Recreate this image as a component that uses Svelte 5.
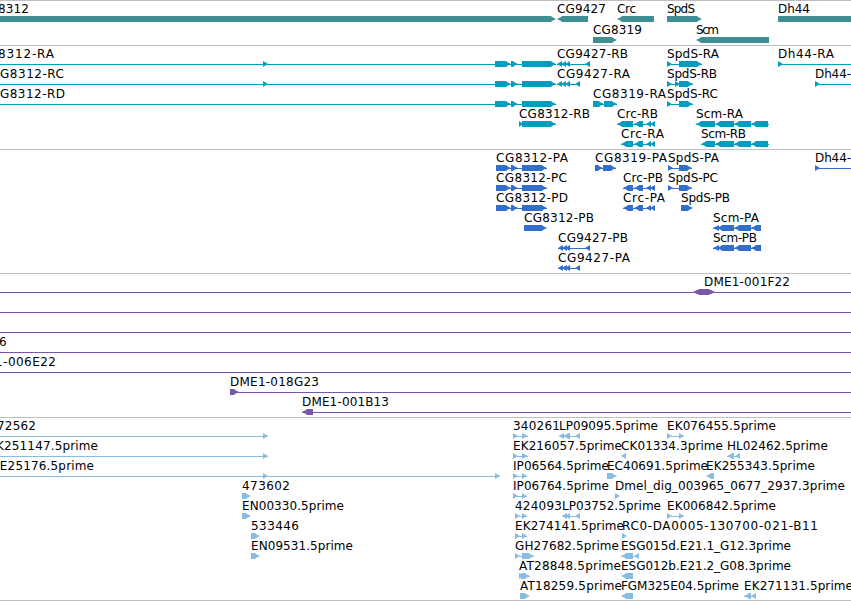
<script>
  // Label: [text, left, right, row]
  // Feature: [row, direction, line start, line end, [[start, end], ...]]
  const tracks = [
    {
      name: 'genes', color: '#3f8e94', height: 45, pitch: 21,
      labels: [
        ['8312', -2, 29, 0], ['CG9427', 557, 606, 0], ['Crc', 617, 636, 0],
        ['SpdS', 667, 695, 0], ['Dh44', 778, 810, 0],
        ['CG8319', 593, 642, 1], ['Scm', 696, 719, 1]
      ],
      features: [
        [0, 'r', 0, 0, [[-10, 556]]], [0, 'l', 0, 0, [[557, 588]]],
        [0, 'l', 0, 0, [[617, 654]]], [0, 'r', 0, 0, [[667, 702]]],
        [0, 'r', 0, 0, [[778, 870]]], [1, 'r', 0, 0, [[593, 617]]],
        [1, 'l', 0, 0, [[696, 769]]]
      ]
    },
    {
      name: 'transcripts', color: '#009dbf', height: 104, pitch: 20,
      labels: [
        ['8312-RA', -2, 54, 0], ['G8312-RC', 0, 64, 1], ['G8312-RD', 0, 65, 2],
        ['CG9427-RB', 557, 628, 0], ['CG9427-RA', 557, 630, 1], ['CG8319-RA', 593, 666, 2],
        ['CG8312-RB', 519, 590, 3], ['Crc-RB', 617, 658, 3], ['Crc-RA', 621, 664, 4],
        ['SpdS-RA', 667, 719, 0], ['SpdS-RB', 667, 717, 1], ['SpdS-RC', 667, 718, 2],
        ['Scm-RA', 696, 743, 3], ['Scm-RB', 701, 746, 4],
        ['Dh44-RA', 778, 834, 0], ['Dh44-', 815, 851, 1]
      ],
      features: [
        [0, 'r', 0, 556, [[263, 268], [495, 511], [511, 518], [522, 556]]],
        [1, 'r', 0, 556, [[263, 268], [495, 511], [511, 518], [522, 556]]],
        [2, 'r', 0, 556, [[495, 511], [511, 518], [522, 556]]],
        [3, 'r', 519, 556, [[519, 523], [522, 556]]],
        [0, 'l', 557, 590, [[557, 562], [561, 566], [565, 570], [585, 590]]],
        [1, 'l', 557, 580, [[557, 562], [561, 566], [565, 570], [575, 580]]],
        [2, 'r', 593, 617, [[593, 604], [604, 617]]],
        [3, 'l', 617, 655, [[617, 633], [634, 643], [646, 651], [650, 655]]],
        [4, 'l', 621, 655, [[621, 633], [634, 643], [646, 651], [650, 655]]],
        [0, 'r', 667, 702, [[667, 672], [679, 702]]],
        [1, 'r', 667, 693, [[667, 672], [675, 680], [679, 693]]],
        [2, 'r', 667, 693, [[667, 672], [679, 693]]],
        [3, 'l', 696, 769, [[696, 715], [715, 734], [734, 751], [751, 768]]],
        [4, 'l', 701, 769, [[701, 715], [715, 734], [734, 751], [751, 768]]],
        [0, 'r', 778, 851, [[778, 783]]],
        [1, 'r', 815, 851, [[815, 820]]]
      ]
    },
    {
      name: 'proteins', color: '#326fcd', height: 124, pitch: 20,
      labels: [
        ['CG8312-PA', 496, 568, 0], ['CG8312-PC', 496, 567, 1], ['CG8312-PD', 496, 568, 2],
        ['CG8312-PB', 524, 594, 3], ['CG9427-PB', 558, 628, 4], ['CG9427-PA', 558, 630, 5],
        ['CG8319-PA', 595, 667, 0], ['Crc-PB', 623, 663, 1], ['Crc-PA', 623, 665, 2],
        ['SpdS-PA', 668, 719, 0], ['SpdS-PC', 668, 718, 1], ['SpdS-PB', 681, 730, 2],
        ['Scm-PA', 713, 759, 3], ['Scm-PB', 713, 757, 4], ['Dh44-', 815, 851, 0]
      ],
      features: [
        [0, 'r', 496, 547, [[496, 511], [511, 518], [522, 547]]],
        [1, 'r', 496, 547, [[496, 511], [511, 518], [522, 547]]],
        [2, 'r', 496, 547, [[496, 511], [511, 518], [522, 547]]],
        [3, 'r', 0, 0, [[524, 547]]],
        [4, 'l', 558, 590, [[558, 563], [562, 567], [565, 570], [585, 590]]],
        [5, 'l', 558, 580, [[558, 563], [562, 567], [565, 570], [575, 580]]],
        [0, 'r', 595, 616, [[595, 603], [603, 616]]],
        [1, 'l', 623, 655, [[623, 633], [634, 643], [646, 651], [650, 655]]],
        [2, 'l', 623, 655, [[623, 633], [634, 643], [646, 651], [650, 655]]],
        [0, 'r', 668, 692, [[668, 673], [679, 692]]],
        [1, 'r', 668, 692, [[668, 673], [679, 692]]],
        [2, 'r', 0, 0, [[681, 693]]],
        [3, 'l', 713, 761, [[713, 719], [717, 734], [734, 751], [751, 761]]],
        [4, 'l', 713, 761, [[713, 719], [717, 734], [734, 751], [751, 761]]],
        [0, 'r', 815, 851, [[815, 820]]]
      ]
    },
    {
      name: 'clones', color: '#7757a7', height: 144, pitch: 20,
      labels: [
        ['DME1-001F22', 704, 790, 0], ['6', -1, 7, 3], ['1-006E22', -5, 56, 4],
        ['DME1-018G23', 230, 319, 5], ['DME1-001B13', 302, 389, 6]
      ],
      features: [
        [0, 'b', 0, 851, [[693, 715]]], [1, 'r', 0, 851, []], [2, 'r', 0, 851, []],
        [3, 'r', 0, 851, []], [4, 'r', 0, 851, []],
        [5, 'r', 230, 851, [[230, 239]]], [6, 'l', 302, 851, [[302, 313]]]
      ]
    },
    {
      name: 'ests', color: '#89bddf', height: 183, pitch: 20,
      labels: [
        ['72562', -3, 36, 0], ['K251147.5prime', -4, 98, 1], ['LE25176.5prime', -7, 94, 2],
        ['473602', 242, 290, 3], ['EN00330.5prime', 242, 344, 4],
        ['533446', 251, 299, 5], ['EN09531.5prime', 251, 353, 6],
        ['340261', 513, 560, 0], ['EK216057.5prime', 513, 622, 1],
        ['IP06564.5prime', 513, 609, 2], ['IP06764.5prime', 513, 609, 3],
        ['424093', 515, 562, 4], ['EK274141.5prime', 515, 624, 5],
        ['GH27682.5prime', 515, 619, 6], ['AT28848.5prime', 519, 621, 7],
        ['AT18259.5prime', 520, 622, 8],
        ['LP09095.5prime', 559, 658, 0], ['EK076455.5prime', 667, 776, 0],
        ['CK01334.3prime', 621, 723, 1], ['HL02462.5prime', 727, 828, 1],
        ['EC40691.5prime', 607, 708, 2], ['EK255343.5prime', 706, 815, 2],
        ['Dmel_dig_003965_0677_2937.3prime', 615, 845, 3],
        ['LP03752.5prime', 562, 661, 4], ['EK006842.5prime', 667, 776, 4],
        ['RC0-DA0005-130700-021-B11', 622, 818, 5],
        ['ESG015d.E21.1_G12.3prime', 621, 791, 6], ['ESG012b.E21.2_G08.3prime', 621, 791, 7],
        ['FGM325E04.5prime', 621, 739, 8], ['EK271131.5prime', 744, 853, 8]
      ],
      features: [
        [0, 'r', 0, 268, [[263, 268]]], [1, 'r', 0, 268, [[263, 268]]],
        [2, 'r', 0, 500, [[263, 268], [495, 500]]],
        [3, 'r', 0, 0, [[242, 251]]], [4, 'r', 0, 0, [[242, 251]]],
        [5, 'r', 0, 0, [[251, 260]]], [6, 'r', 0, 0, [[251, 260]]],
        [0, 'r', 513, 528, [[513, 518], [522, 528]]],
        [1, 'r', 513, 528, [[513, 518], [522, 528]]],
        [2, 'r', 513, 527, [[513, 518], [522, 527]]],
        [3, 'r', 513, 527, [[513, 518], [522, 527]]],
        [4, 'r', 515, 527, [[515, 520], [522, 527]]],
        [5, 'r', 515, 527, [[515, 520], [522, 527]]],
        [6, 'r', 515, 534, [[515, 520], [522, 534]]],
        [7, 'r', 519, 530, [[519, 524], [521, 530]]],
        [8, 'r', 0, 0, [[520, 530]]],
        [0, 'l', 559, 580, [[559, 564], [563, 570], [575, 580]]],
        [4, 'l', 562, 580, [[562, 567], [565, 570], [575, 580]]],
        [0, 'r', 667, 684, [[667, 672], [679, 684]]],
        [4, 'r', 667, 684, [[667, 672], [679, 684]]],
        [1, 'l', 0, 0, [[621, 626]]],
        [1, 'l', 727, 740, [[727, 734], [735, 740]]],
        [2, 'r', 0, 0, [[607, 617]]], [2, 'l', 0, 0, [[706, 714]]],
        [3, 'r', 0, 0, [[615, 620]]], [5, 'r', 0, 0, [[622, 627]]],
        [6, 'l', 621, 639, [[621, 633], [634, 639]]],
        [7, 'l', 0, 0, [[621, 633]]], [8, 'l', 0, 0, [[621, 633]]],
        [8, 'l', 744, 756, [[744, 751], [751, 756]]]
      ]
    }
  ];

  // Exon block whose pointed end gives the strand
  function exon(a, b, dir, y) {
    const w = b - a;
    if (dir === 'b') {
      return `M${a} ${y + 3}L${a + 5} ${y + 0.5}L${a + 7} ${y}H${b - 7}L${b - 5} ${y + 0.5}L${b} ${y + 3}L${b - 5} ${y + 5.5}L${b - 7} ${y + 6}H${a + 7}L${a + 5} ${y + 5.5}Z`;
    }
    const s = dir === 'r' ? 1 : -1;
    const tail = s > 0 ? a : b;
    const tip = s > 0 ? b : a;
    if (w <= 6) return `M${tail} ${y}L${tip} ${y + 3}L${tail} ${y + 6}Z`;
    return `M${tail} ${y}H${tip - 5 * s}L${tip - 4 * s} ${y + 1}L${tip} ${y + 3}L${tip - 4 * s} ${y + 5}L${tip - 5 * s} ${y + 6}H${tail}Z`;
  }
</script>

<main>
  {#each tracks as track (track.name)}
    <section class={track.name}>
      <svg width="851" height={track.height - 1} fill={track.color}>
        {#each track.features as [row, dir, from, to, exons]}
          {#if to > from}
            <rect x={from} y={18 + row * track.pitch} width={to - from} height="1" />
          {/if}
          {#each exons as [a, b]}
            <path d={exon(a, b, dir, 15 + row * track.pitch)} />
          {/each}
        {/each}
        {#each track.labels as [text, left, right, row]}
          <text x={left} y={12 + row * track.pitch} textLength={right - left}>{text}</text>
        {/each}
      </svg>
    </section>
  {/each}
</main>

<style>
  :global(body) {
    background: #fff;
  }
  main {
    width: 851px;
    height: 601px;
    box-sizing: border-box;
    overflow: hidden;
    border-bottom: 1px solid #bebebe;
  }
  section {
    border-top: 1px solid #bebebe;
  }
  svg {
    display: block;
  }
  text {
    font: 12px "DejaVu Sans", sans-serif;
    fill: #000;
  }
</style>
